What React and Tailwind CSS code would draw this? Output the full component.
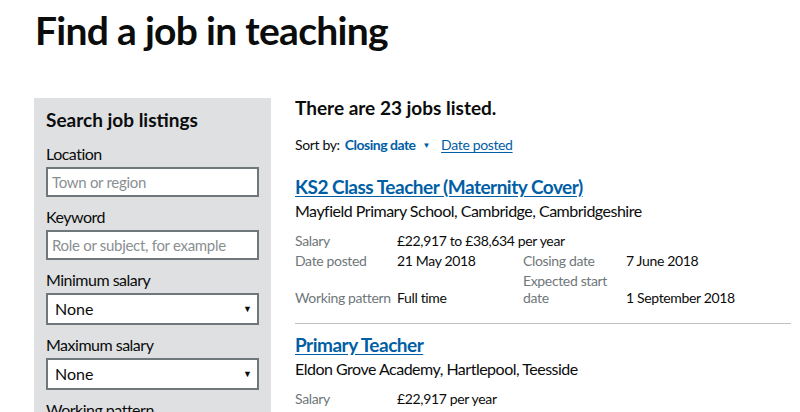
import { memo } from "react";

const jobs = [
  {
    title: "KS2 Class Teacher (Maternity Cover)",
    school: "Mayfield Primary School, Cambridge, Cambridgeshire",
    salary: "£22,917 to £38,634 per year",
    posted: "21 May 2018",
    closing: "7 June 2018",
    pattern: "Full time",
    start: "1 September 2018",
  },
  {
    title: "Primary Teacher",
    school: "Eldon Grove Academy, Hartlepool, Teesside",
    salary: "£22,917 per year",
    posted: "18 May 2018",
    closing: "8 June 2018",
    pattern: "Full time",
    start: "1 September 2018",
  },
];

const Field = ({ label, placeholder }) => (
  <div className="mb-[10px]">
    <label className="block text-[16px] leading-5 mb-[3px] tracking-[-0.5px]">{label}</label>
    <div className="h-[30px] bg-white border-2 border-[#6f777b] flex items-center px-[4px] text-[15px] tracking-[-0.3px] text-[#8a8f92]">
      {placeholder}
    </div>
  </div>
);

const Select = ({ label }) => (
  <div className="mb-[10px]">
    <label className="block text-[16px] leading-5 mb-[3px] tracking-[-0.5px]">{label}</label>
    <div className="h-[32px] bg-white border-2 border-[#6f777b] flex items-center justify-between pl-[7px] pr-[5px] text-[16px]">
      <span>None</span>
      <span className="text-[9px]">▼</span>
    </div>
  </div>
);

const JobRow = ({ job, last }) => (
  <div className={`pb-[17px] ${last ? "" : "border-b border-[#bfc1c3]"} mb-[9px]`}>
    <a href="#" className="block text-[19px] leading-6 font-bold text-[#005ea5] underline underline-offset-2 tracking-[-0.5px]">
      {job.title}
    </a>
    <p className="text-[16px] leading-5 mt-[2px] tracking-[-0.5px]">{job.school}</p>
    <div className="grid grid-cols-[102px_126px_103px_1fr] gap-y-[3px] items-end text-[14px] leading-[17px] mt-[11px] tracking-[-0.35px]">
      <span className="text-[#6f777b]">Salary</span>
      <span className="col-span-3">{job.salary}</span>
      <span className="text-[#6f777b]">Date posted</span>
      <span>{job.posted}</span>
      <span className="text-[#6f777b]">Closing date</span>
      <span>{job.closing}</span>
      <span className="text-[#6f777b]">Working pattern</span>
      <span>{job.pattern}</span>
      <span className="text-[#6f777b]">Expected start date</span>
      <span>{job.start}</span>
    </div>
  </div>
);

const App = () => {
  return (
    <div className="h-[412px] overflow-hidden bg-white text-[#0b0c0c] font-['Lato',sans-serif]">
      <h1 className="pl-[35px] pt-[6px] text-[39px] leading-[48px] font-bold tracking-[-0.7px]">
        Find a job in teaching
      </h1>
      <div className="flex gap-[24px] pl-[34px] pr-[9px] mt-[44px]">
        {/* Filters */}
        <aside className="w-[237px] shrink-0 bg-[#dee0e2] px-[12px] pt-[10px] pb-4">
          <h2 className="text-[19px] leading-6 font-bold mb-[12px]">Search job listings</h2>
          <Field label="Location" placeholder="Town or region" />
          <Field label="Keyword" placeholder="Role or subject, for example" />
          <Select label="Minimum salary" />
          <Select label="Maximum salary" />
          <label className="block text-[16px] leading-5 tracking-[-0.5px]">Working pattern</label>
        </aside>

        {/* Results */}
        <main className="flex-1 min-w-0">
          <h2 className="text-[19px] leading-5 font-bold">There are 23 jobs listed.</h2>
          <div className="flex items-center text-[14px] leading-5 mt-[17px] tracking-[-0.35px]">
            <span>Sort by:</span>
            <span className="ml-[5px] font-bold text-[#005ea5] tracking-[-0.5px]">Closing date</span>
            <span className="ml-[7px] text-[8px] text-[#005ea5]">▼</span>
            <a href="#" className="ml-[11px] text-[#005ea5] underline underline-offset-2">Date posted</a>
          </div>
          <div className="mt-[20px]">
            {jobs.map((job, i) => (
              <JobRow key={job.title} job={job} last={i === jobs.length - 1} />
            ))}
          </div>
        </main>
      </div>
    </div>
  );
};

export default memo(App);
